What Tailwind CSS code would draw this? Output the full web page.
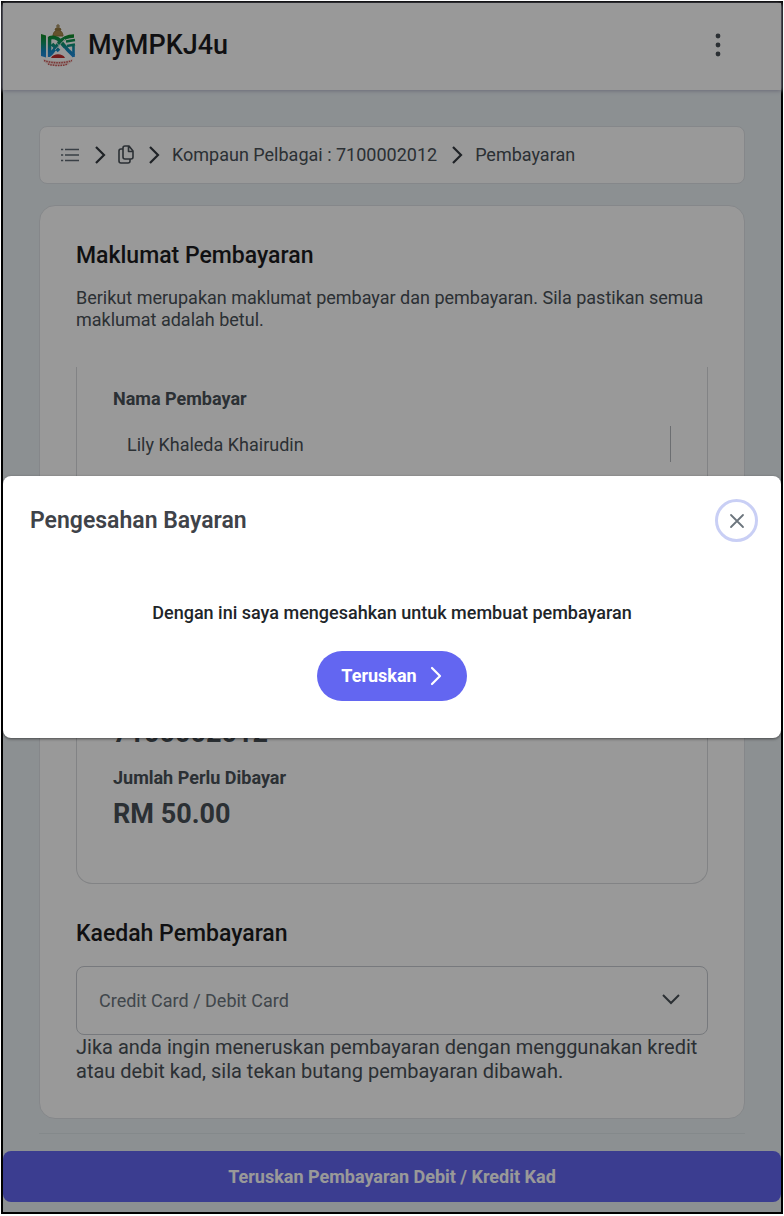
<!DOCTYPE html>
<html lang="ms">
<head>
<meta charset="utf-8">
<meta name="viewport" content="width=device-width, initial-scale=1">
<title>MyMPKJ4u</title>
<script src="https://cdn.jsdelivr.net/npm/@tailwindcss/browser@4"></script>
</head>
<body class="bg-white p-px font-['Roboto',sans-serif] text-lg text-[#495057]">
<div class="relative border-2 border-black bg-[#e9f0f4]">
  <header class="flex h-[87px] items-center justify-between bg-white pr-[51px] pb-1 pl-[37px] shadow-[0_1px_4px_#b4b4c8]">
    <a href="#" class="flex items-center gap-3 text-[27px] leading-9 font-medium text-[#1c1c20]">
      <svg class="h-11 w-9" viewBox="0 0 36 44" fill="none" aria-hidden="true">
        <defs><linearGradient id="g" gradientUnits="userSpaceOnUse" x1="0" y1="10" x2="0" y2="36"><stop offset="0" stop-color="#128a18"/><stop offset=".4" stop-color="#0e9468"/><stop offset=".7" stop-color="#1288c8"/><stop offset="1" stop-color="#2a8ee0"/></linearGradient></defs>
        <path d="M18 1v4M16 3h4M15 7h6l-1-2h-4zM13 13c0-3 2-6 5-6s5 3 5 6z" fill="#a8894a" stroke="#8f743a" stroke-width="1"/>
        <path d="M1 11l5 1.500v22L1 33z" fill="url(#g)"/>
        <path d="M9.500 14v20M9 15c6-2 10 1 13 5s6 8 12 13M34 13c-8 0-12 3-15 7s-6 9-10 13M12 21l7 7M18 16l7 8" stroke="url(#g)" stroke-width="3.600"/>
        <path d="M26 18.500l9-1.500M27 23l8-1.500M33.500 22v12" stroke="url(#g)" stroke-width="2.600"/>
        <path d="M7.300 12v23M14 17l9 10M25 16l-10 11" stroke="#fff" stroke-width=".8"/>
        <path d="M8 37c3-8 17-8 20 0z" fill="#fff"/>
        <path d="M11 35c2-5 12-5 14 0z" fill="#c22a2a"/>
        <path d="M3 36c8 3 22 3 30 0-2 6-8 7-15 7S5 42 3 36z" fill="#f6dedb"/>
        <path d="M4 37.500c8 3 20 3 28 0M8 41c6 2 14 2 20 0" stroke="#cb5656" stroke-width="1.500" stroke-dasharray="1.500 1"/>
      </svg>
      <span>MyMPKJ4u</span>
    </a>
    <button type="button" aria-label="Menu" class="p-1">
      <svg class="h-6 w-4" viewBox="0 0 16 24" fill="#495057" aria-hidden="true"><circle cx="8" cy="3" r="2.400"/><circle cx="8" cy="12" r="2.400"/><circle cx="8" cy="21" r="2.400"/></svg>
    </button>
  </header>

  <main class="px-9 pt-9">
    <nav aria-label="Breadcrumb" class="flex h-[58px] items-center gap-[11px] rounded-lg border border-[#dee2e6] bg-white pl-5">
      <a href="#" aria-label="Senarai"><svg class="h-5 w-5" viewBox="0 0 20 20" fill="none" stroke="#5f6973" stroke-width="1.600" aria-hidden="true"><path d="M5 4.500h14M5 10h14M5 15.500h14M1 4.500h2.200M1 10h2.200M1 15.500h2.200"/></svg></a>
      <svg class="h-5 w-4" viewBox="0 0 16 20" fill="none" stroke="#343a40" stroke-width="2.200" aria-hidden="true"><path d="M5 2l8 8-8 8"/></svg>
      <a href="#" aria-label="Dokumen"><svg class="h-5 w-4" viewBox="0 0 16 20" fill="none" stroke="#495057" stroke-width="1.600" stroke-linejoin="round" aria-hidden="true"><path d="M7 1h4l4 5v6q0 2-2 2H7q-2 0-2-2V3q0-2 2-2zM10.500 1v5.500H15M5 4H3Q1 4 1 6v10q0 2 2 2h7q2 0 2-2v-2"/></svg></a>
      <svg class="h-5 w-4" viewBox="0 0 16 20" fill="none" stroke="#343a40" stroke-width="2.200" aria-hidden="true"><path d="M5 2l8 8-8 8"/></svg>
      <a href="#">Kompaun Pelbagai : 7100002012</a>
      <svg class="h-5 w-4" viewBox="0 0 16 20" fill="none" stroke="#343a40" stroke-width="2.200" aria-hidden="true"><path d="M5 2l8 8-8 8"/></svg>
      <span aria-current="page">Pembayaran</span>
    </nav>

    <section class="mt-[21px] rounded-2xl border border-[#dee2e6] bg-white px-9 pt-[34px] pb-[35px]">
      <h1 class="text-[23px] leading-8 font-medium text-[#1c1c20]">Maklumat Pembayaran</h1>
      <p class="mt-[15px] leading-[22px]">Berikut merupakan maklumat pembayar dan pembayaran. Sila pastikan semua maklumat adalah betul.</p>

      <div class="mt-9 rounded-b-2xl border-x border-b border-[#d9dbde] px-9 pt-5 pb-[51px]">
        <label for="payer" class="block leading-6 font-bold">Nama Pembayar</label>
        <input id="payer" readonly value="Lily Khaleda Khairudin" class="mt-[15px] block h-9 w-full border-r border-[#b4b8bd] pl-[14px] outline-none">
        <p class="mt-[253px] text-[27px] leading-9 font-bold">7100002012</p>
        <p class="mt-[15px] leading-6 font-bold">Jumlah Perlu Dibayar</p>
        <p class="mt-[6px] text-[27px] leading-9 font-bold">RM 50.00</p>
      </div>

      <h2 class="mt-[34px] text-[23px] leading-8 font-medium text-[#1c1c20]"><label for="method">Kaedah Pembayaran</label></h2>
      <div class="relative mt-4">
        <select id="method" class="block h-[69px] w-full appearance-none rounded-lg border border-[#c6cad0] bg-white px-[22px] text-[#6c757d]"><option>Credit Card / Debit Card</option></select>
        <svg class="pointer-events-none absolute top-[25px] right-[27px] h-4 w-5" viewBox="0 0 20 16" fill="none" stroke="#495057" stroke-width="2" aria-hidden="true"><path d="M2 4l8 8 8-8"/></svg>
      </div>
      <p class="text-xl leading-6">Jika anda ingin meneruskan pembayaran dengan menggunakan kredit atau debit kad, sila tekan butang pembayaran dibawah.</p>
    </section>
    <hr class="mt-[14px] border-[#dde4e8]">
  </main>
  <div class="pt-[17px] pb-[10px]">
    <button type="button" class="block h-[51px] w-full rounded-lg bg-[#6366f1] font-bold text-white">Teruskan Pembayaran Debit / Kredit Kad</button>
  </div>

  <div class="absolute inset-0 flex items-center bg-black/40 pb-px">
    <div role="dialog" aria-modal="true" aria-labelledby="dlg" class="h-[262px] w-full rounded-lg bg-white shadow-[0_1px_3px_rgba(0,0,0,0.5)]">
      <div class="flex items-center justify-between pt-[23px] pr-[23px] pl-[27px]">
        <h2 id="dlg" class="text-[23px] leading-8 font-semibold text-[#3f4349]">Pengesahan Bayaran</h2>
        <button type="button" aria-label="Tutup" class="flex h-[43px] w-[43px] items-center justify-center rounded-full border-[3px] border-[#c9cff5]">
          <svg class="h-4 w-4" viewBox="0 0 16 16" fill="none" stroke="#6c757d" stroke-width="1.800" stroke-linecap="round" aria-hidden="true"><path d="M2 2l12 12M14 2L2 14"/></svg>
        </button>
      </div>
      <div class="flex flex-col items-center pt-[59px]">
        <p class="leading-6 font-medium text-[#212529]">Dengan ini saya mengesahkan untuk membuat pembayaran</p>
        <button type="button" class="mt-[26px] flex h-[50px] items-center gap-[10px] rounded-full bg-[#6366f1] px-6 font-bold text-white">Teruskan
          <svg class="h-5 w-4" viewBox="0 0 16 20" fill="none" stroke="#fff" stroke-width="2.200" stroke-linecap="round" stroke-linejoin="round" aria-hidden="true"><path d="M5 2l8 8-8 8"/></svg>
        </button>
      </div>
    </div>
  </div>
</div>
</body>
</html>
